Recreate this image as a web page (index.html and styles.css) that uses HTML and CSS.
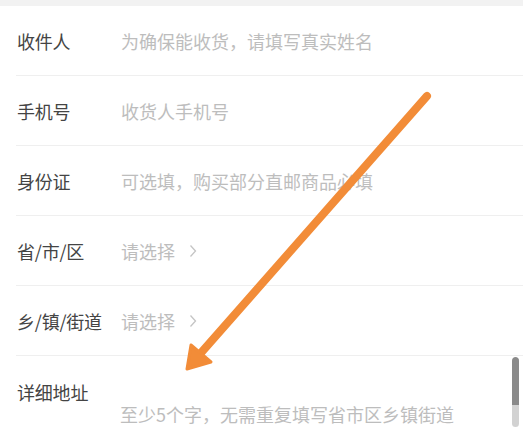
FILE: index.html
```html
<!DOCTYPE html>
<html lang="zh-CN">

<head>
    <meta charset="UTF-8">
    <meta name="viewport" content="width=device-width, initial-scale=1.0">
    <title>收货地址</title>
    <link rel="stylesheet" href="styles.css">
</head>

<body>
    <div class="top-band"></div>
    <form class="address-form">
        <div class="row">
            <span class="label">收件人</span>
            <span class="placeholder">为确保能收货，请填写真实姓名</span>
        </div>
        <div class="row">
            <span class="label">手机号</span>
            <span class="placeholder">收货人手机号</span>
        </div>
        <div class="row">
            <span class="label">身份证</span>
            <span class="placeholder">可选填，购买部分直邮商品必填</span>
        </div>
        <div class="row">
            <span class="label">省/市/区</span>
            <span class="placeholder">请选择</span>
            <svg class="chevron" width="8" height="14" viewBox="0 0 8 14">
                <path d="M1.5 1.5 L6.5 7 L1.5 12.5" fill="none" stroke="#c4c4c4" stroke-width="1.3" />
            </svg>
        </div>
        <div class="row">
            <span class="label">乡/镇/街道</span>
            <span class="placeholder">请选择</span>
            <svg class="chevron" width="8" height="14" viewBox="0 0 8 14">
                <path d="M1.5 1.5 L6.5 7 L1.5 12.5" fill="none" stroke="#c4c4c4" stroke-width="1.3" />
            </svg>
        </div>
        <div class="row row-detail">
            <span class="label">详细地址</span>
            <span class="placeholder detail-text">至少5个字，无需重复填写省市区乡镇街道</span>
        </div>
    </form>

    <!-- 标注箭头 -->
    <svg class="arrow" width="523" height="441" viewBox="0 0 523 441">
        <line x1="427" y1="96" x2="200" y2="354" stroke="#f28c38" stroke-width="8" stroke-linecap="round" />
        <polygon points="187,369 191,345 211,362" fill="#f28c38" stroke="#f28c38" stroke-width="3" stroke-linejoin="round" />
    </svg>

    <div class="scrollbar">
        <div class="scroll-thumb"></div>
    </div>
</body>

</html>
```

FILE: styles.css
```css
body {
    margin: 0;
    background-color: #fff;
    font-family: "Noto Sans CJK SC", "Noto Sans", sans-serif;
    width: 523px;
    height: 441px;
    overflow: hidden;
    position: relative;
}

.top-band {
    height: 6px;
    background-color: #f2f2f2;
}

.address-form {
    margin: 0;
}

.row {
    display: flex;
    align-items: center;
    height: 70px;
    margin-left: 16px;
    padding-left: 1px;
    border-bottom: 1px solid #efefef;
    box-sizing: border-box;
}

.label {
    width: 104px;
    flex-shrink: 0;
    font-size: 18px;
    color: #444;
    letter-spacing: -0.2px;
}

.placeholder {
    font-size: 18px;
    color: #bdbdbd;
    white-space: nowrap;
}

.chevron {
    margin-left: 14px;
}

.row-detail {
    flex-wrap: wrap;
    align-items: flex-start;
    align-content: flex-start;
    height: auto;
    padding-top: 22px;
    border-bottom: none;
}

.row-detail .label {
    width: 100%;
    line-height: 28px;
}

.detail-text {
    margin-left: 103px;
    margin-top: -6px;
    line-height: 28px;
}

/* 标注箭头 */
.arrow {
    position: absolute;
    left: 0;
    top: 0;
    pointer-events: none;
}

.scrollbar {
    position: absolute;
    left: 512px;
    top: 357px;
    width: 7px;
    height: 70px;
    border-radius: 4px;
    background-color: #d2d2d2;
    overflow: hidden;
}

.scroll-thumb {
    height: 48px;
    background-color: #8a8a8a;
    border-radius: 4px 4px 0 0;
}
```
